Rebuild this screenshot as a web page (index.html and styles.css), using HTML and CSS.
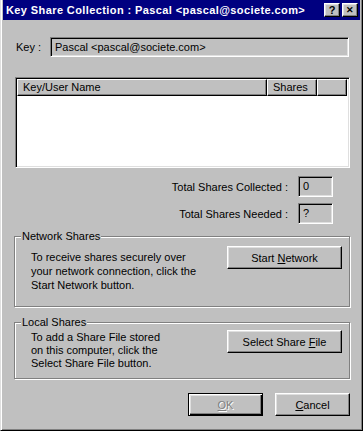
FILE: index.html
```html
<!DOCTYPE html>
<html>
<head>
<meta charset="utf-8">
<link rel="stylesheet" href="styles.css">
</head>
<body>
<div class="window">
  <div class="titlebar">
    <span class="title">Key Share Collection : Pascal &lt;pascal@societe.com&gt;</span>
    <div class="tbtns">
      <span class="tbtn">?</span>
      <span class="tbtn tclose">&#x2715;</span>
    </div>
  </div>
  <div class="content">
    <div class="keyrow">
      <span class="keylbl">Key :</span>
      <div class="field">Pascal &lt;pascal@societe.com&gt;</div>
    </div>
    <div class="list">
      <div class="lhead">
        <div class="hc c1">Key/User Name</div>
        <div class="hc c2">Shares</div>
        <div class="hc c3"></div>
      </div>
    </div>
    <div class="totals">
      <div class="trow"><span class="tlbl">Total Shares Collected :</span><div class="tbox">0</div></div>
      <div class="trow"><span class="tlbl">Total Shares Needed :</span><div class="tbox">?</div></div>
    </div>
    <fieldset class="group g1">
      <legend>Network Shares</legend>
      <div class="gbody">
        <p class="gtext">To receive shares securely over<br>your network connection, click the<br>Start Network button.</p>
        <button class="btn gbtn">Start <u>N</u>etwork</button>
      </div>
    </fieldset>
    <fieldset class="group g2">
      <legend>Local Shares</legend>
      <div class="gbody">
        <p class="gtext">To add a Share File stored<br>on this computer, click the<br>Select Share File button.</p>
        <button class="btn gbtn">Select Share <u>F</u>ile</button>
      </div>
    </fieldset>
    <div class="actions">
      <button class="btn default" disabled><u>O</u>K</button>
      <button class="btn"><u>C</u>ancel</button>
    </div>
  </div>
</div>
</body>
</html>
```

FILE: styles.css
```css
* { box-sizing: border-box; }
html, body { margin: 0; padding: 0; background: #c0c0c0; }
body {
  font-family: "Liberation Sans", Arial, sans-serif;
  font-size: 11px;
  color: #000;
}
.window {
  width: 363px;
  height: 431px;
  background: #c0c0c0;
  border-left: 1px solid #dfdfdf;
  border-right: 1px solid #000;
  border-bottom: 1px solid #000;
  box-shadow: inset 1px 0 #fff, inset -1px -1px #808080;
  padding: 0 2px 2px 2px;
  display: flex;
  flex-direction: column;
}
.titlebar {
  height: 20px;
  background: #000080;
  color: #fff;
  display: flex;
  align-items: center;
  padding: 0 2px 0 3px;
}
.title {
  font-weight: bold;
  font-size: 11px;
  letter-spacing: 0.4px;
  flex: 1;
  white-space: nowrap;
}
.tbtns { display: flex; gap: 2px; }
.tbtn {
  width: 16px;
  height: 14px;
  background: #c0c0c0;
  color: #000;
  border: 1px solid;
  border-color: #fff #000 #000 #fff;
  box-shadow: inset -1px -1px #808080, inset 1px 1px #dfdfdf;
  font-weight: bold;
  font-size: 11px;
  line-height: 12px;
  text-align: center;
}
.tclose { font-size: 9px; }
.content {
  flex: 1;
  padding: 0 10px 0 11px;
  display: flex;
  flex-direction: column;
}
.keyrow {
  margin-top: 17px;
  display: flex;
  align-items: center;
}
.keylbl { width: 36px; padding-left: 2px; }
.field {
  flex: 1;
  height: 20px;
  margin-right: 1px;
  border: 1px solid;
  border-color: #808080 #fff #fff #808080;
  box-shadow: inset 1px 1px #000, inset -1px -1px #dfdfdf;
  padding: 3px 3px 0 4px;
  white-space: nowrap;
}
.list {
  margin: 20px 0 0 1px;
  height: 91px;
  background: #fff;
  border: 1px solid;
  border-color: #808080 #fff #fff #808080;
  box-shadow: inset 1px 1px #000, inset -1px -1px #dfdfdf;
  padding: 1px 2px 2px 1px;
}
.lhead { display: flex; height: 17px; }
.hc {
  background: #c0c0c0;
  border: 1px solid;
  border-color: #fff #000 #000 #fff;
  box-shadow: inset -1px -1px #808080;
  padding: 1px 0 0 5px;
  white-space: nowrap;
}
.c1 { width: 250px; }
.c2 { width: 50px; }
.c3 { flex: 1; }
.totals {
  margin-top: 8px;
  display: flex;
  flex-direction: column;
  gap: 6px;
  align-items: flex-end;
  padding-right: 17px;
}
.trow { display: flex; align-items: center; gap: 10px; }
.tbox {
  width: 35px;
  height: 21px;
  border: 1px solid;
  border-color: #808080 #fff #fff #808080;
  box-shadow: inset 1px 1px #000, inset -1px -1px #dfdfdf;
  padding: 3px 0 0 4px;
}
.group {
  margin: 0;
  border: 1px solid #808080;
  box-shadow: 1px 1px 0 #fff, inset 1px 1px 0 #fff;
  padding: 0;
  min-width: 0;
}
.group legend {
  padding: 0 1px;
  margin-left: 6px;
  background: #c0c0c0;
  line-height: 13px;
}
.g1 { margin-top: 6px; height: 77px; }
.g2 { margin-top: 9px; height: 63px; }
.gbody {
  display: flex;
  justify-content: space-between;
  padding: 0 7px 0 16px;
}
.g1 .gbody { padding-top: 2px; }
.g2 .gbody { padding-top: 0; }
.gtext { margin: 0; line-height: 14px; }
.g1 .gtext { margin-top: 5px; }
.g2 .gtext { margin-top: 2px; line-height: 13px; }
.btn {
  font-family: "Liberation Sans", Arial, sans-serif;
  font-size: 11px;
  color: #000;
  background: #c0c0c0;
  border: 1px solid;
  border-color: #fff #000 #000 #fff;
  box-shadow: inset -1px -1px #808080, inset 1px 1px #dfdfdf;
  padding: 0;
  height: 23px;
}
.gbtn { width: 115px; margin-top: 1px; }
.actions {
  margin-top: auto;
  margin-bottom: 12px;
  display: flex;
  justify-content: flex-end;
  gap: 12px;
}
.actions .btn { width: 75px; }
.btn.default {
  border: 1px solid #000;
  box-shadow: inset 1px 1px #fff, inset -1px -1px #000, inset -2px -2px #808080, inset 2px 2px #dfdfdf;
}
.btn:disabled {
  color: #808080;
  text-shadow: 1px 1px 0 #fff;
}
```
